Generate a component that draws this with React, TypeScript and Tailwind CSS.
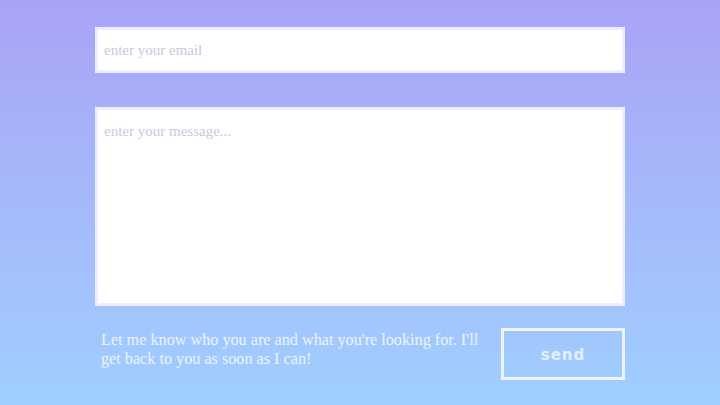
export default function App() {
    return (
        <main className="flex h-[405px] w-[720px] flex-col items-center bg-linear-to-b from-[#a9a3f6] to-[#9fcfff] pt-[27px]">
            <form className="flex w-[530px] flex-col" style={{ fontFamily: "'Liberation Serif', Georgia, serif" }}>
                <input
                    type="email"
                    placeholder="enter your email"
                    className="h-[46px] w-full border-[3px] border-[#eceefb] bg-white px-[6px] text-[15px] text-gray-700 placeholder:text-[#c9c9d9] focus:outline-0"
                />
                <textarea
                    placeholder="enter your message..."
                    className="mt-[34px] h-[199px] w-full resize-none border-[3px] border-[#eceefb] bg-white px-[6px] py-[10px] text-[15px] text-gray-700 placeholder:text-[#c9c9d9] focus:outline-0"
                />
                <div className="mt-[22px] flex flex-row items-start justify-between">
                    <p className="w-[392px] pt-[3px] pl-[6px] text-[16.2px] leading-[19px] text-[#eef2ff]">
                        Let me know who you are and what you're looking for. I'll get back to you as soon as I can!
                    </p>
                    <button
                        type="button"
                        className="h-[52px] w-[124px] border-[3px] border-[#eef3ff] pt-[2px] text-[15px] font-bold tracking-[1px] text-[#e6efff]"
                        style={{ fontFamily: "'DejaVu Sans', sans-serif" }}
                    >
                        send
                    </button>
                </div>
            </form>
        </main>
    );
}
